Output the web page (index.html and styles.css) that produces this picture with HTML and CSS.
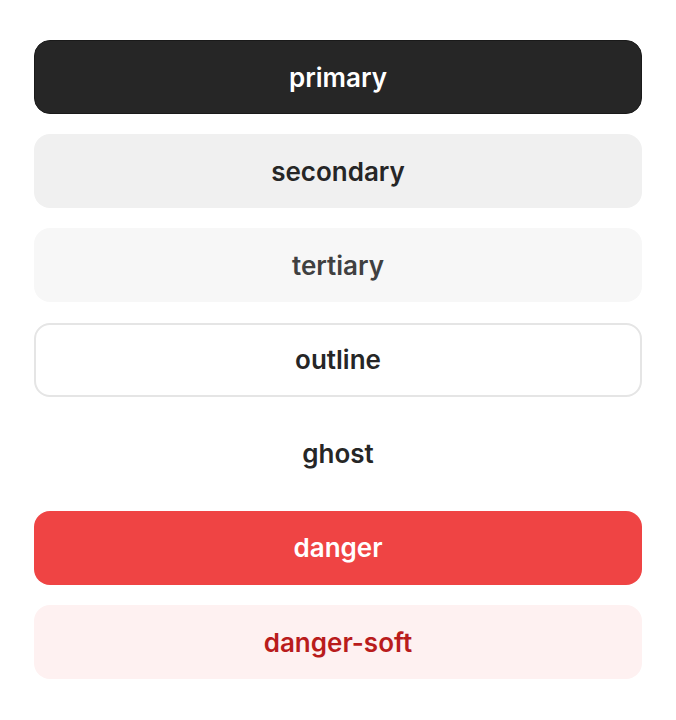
FILE: index.html
```html
<!DOCTYPE html>
<html lang="en">
<head>
    <meta charset="UTF-8">
    <meta name="viewport" content="width=device-width, initial-scale=1.0">
    <title>Buttons</title>
    <link rel="stylesheet" href="styles.css">
</head>
<body>
    <div class="stack">
        <button class="btn primary">primary</button>
        <button class="btn secondary">secondary</button>
        <button class="btn tertiary">tertiary</button>
        <button class="btn outline">outline</button>
        <button class="btn ghost">ghost</button>
        <button class="btn danger">danger</button>
        <button class="btn danger-soft">danger-soft</button>
    </div>
</body>
</html>
```

FILE: styles.css
```css
body {
    margin: 0;
    padding: 40px 34px;
    background: #ffffff;
    font-family: Inter, "Noto Sans", sans-serif;
}
.stack {
    display: flex;
    flex-direction: column;
    gap: 20.2px;
}
.btn {
    height: 74px;
    width: 100%;
    border: 1px solid transparent;
    border-radius: 16px;
    font-family: inherit;
    font-size: 26px;
    font-weight: 600;
    cursor: pointer;
}
.primary {
    background: #262626;
    border-color: #1a1a1a;
    color: #ffffff;
}
.secondary {
    background: #f0f0f0;
    color: #262626;
}
.tertiary {
    background: #f7f7f7;
    color: #404040;
}
.outline {
    background: #ffffff;
    border: 2px solid #e5e5e5;
    color: #262626;
}
.ghost {
    background: transparent;
    color: #262626;
}
.danger {
    background: #ef4444;
    color: #ffffff;
}
.danger-soft {
    background: #fef1f1;
    color: #b91c1c;
}
```
